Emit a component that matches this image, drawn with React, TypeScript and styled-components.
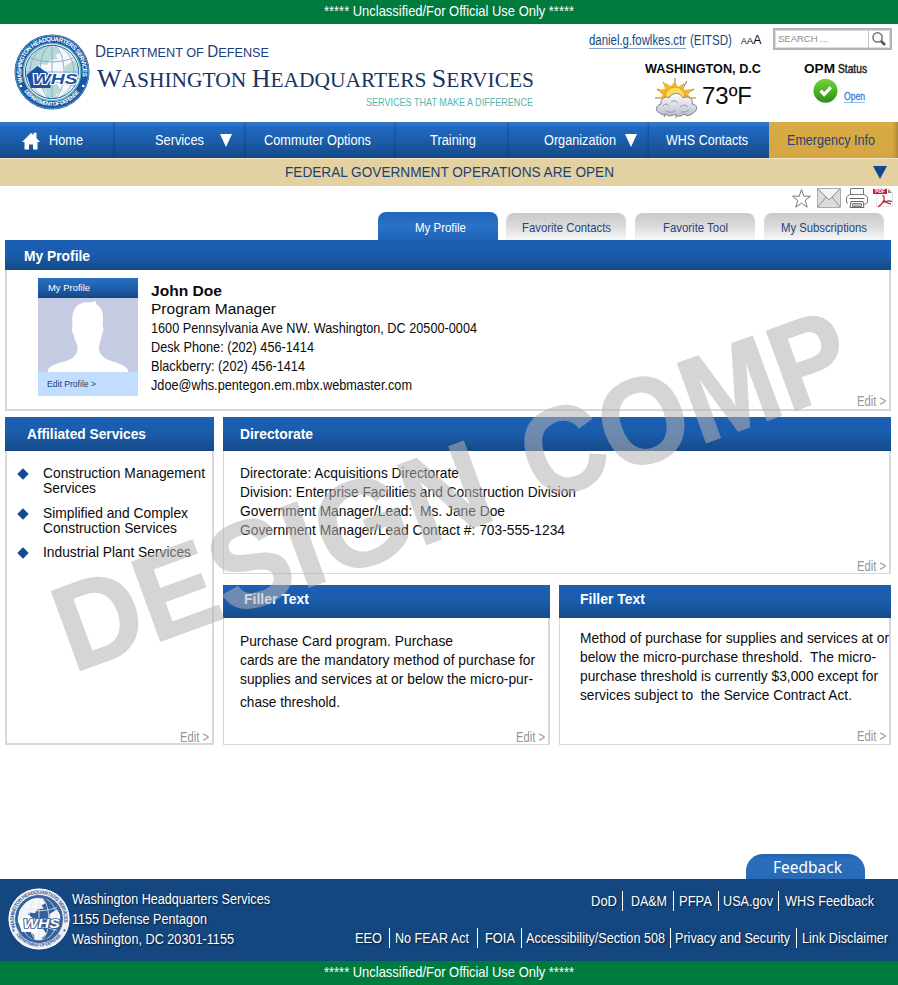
import React, { useId, useLayoutEffect, useRef, useState } from "react";
import styled, { createGlobalStyle, css } from "styled-components";

const GlobalStyle = createGlobalStyle`
  *, *::before, *::after { box-sizing: border-box; }
  body { margin: 0; background: #fff; }
  #root { width: 898px; }
  a { color: inherit; text-decoration: none; }
  svg { display: block; }
`;

const blue = "#154880";
const sans = `"Liberation Sans", Arial, sans-serif`;

/* ---------- text set to a fixed measure ---------- */

const Measure = styled.span<{ $width: number }>`
  display: block;
  flex: none;
  width: ${(p) => p.$width}px;
  white-space: pre;
`;

const Stretch = styled.span`
  display: inline-block;
  vertical-align: top;
  transform-origin: 0 0;
`;

function Fit({ width, children }: { width: number; children: React.ReactNode }) {
  const ref = useRef<HTMLSpanElement>(null);
  const [scale, setScale] = useState(1);
  useLayoutEffect(() => {
    const node = ref.current;
    if (node && node.offsetWidth) {
      const natural = parseFloat(getComputedStyle(node).width);
      setScale(width / natural);
    }
  }, [width]);
  return (
    <Measure $width={width}>
      <Stretch ref={ref} style={{ transform: `scaleX(${scale})` }}>
        {children}
      </Stretch>
    </Measure>
  );
}

/* ---------- page frame ---------- */

const Page = styled.div`
  position: relative;
  width: 898px;
  height: 985px;
  display: flex;
  flex-direction: column;
  overflow: hidden;
  background: #fff;
  color: #0b0b0b;
  font-family: ${sans};
`;

const Classification = styled.div`
  flex: none;
  height: 24px;
  display: flex;
  justify-content: center;
  background: #007b3e;
  color: #fff;
  font-size: 14.6px;
  line-height: 22px;
`;

/* ---------- header ---------- */

const Header = styled.header`
  flex: none;
  height: 98px;
  display: flex;
`;

const Brand = styled.div`
  width: 576px;
  display: flex;
  padding: 10px 0 0 14px;
`;

const BrandNames = styled.div`
  padding: 8px 0 0 5px;
`;

const Department = styled.div`
  height: 20px;
  color: #1c3f7c;
  font-size: 13.6px;
  line-height: 21px;
  big { font-size: 16.4px; line-height: 1; }
`;

const Agency = styled.h1`
  margin: 3px 0 0 2px;
  height: 30px;
  color: #17345f;
  font: 400 21.5px/30px "Liberation Serif", "Times New Roman", serif;
  big { font-size: 26px; line-height: 1; }
`;

const Motto = styled.div`
  margin: -1px 0 0 271px;
  color: #56b5ad;
  font-size: 11.4px;
  line-height: 16px;
`;

const Tools = styled.div`
  width: 322px;
  display: flex;
  flex-direction: column;
`;

const UserRow = styled.div`
  display: flex;
  height: 34px;
  padding: 4px 0 0 13px;
`;

const UserName = styled.a`
  height: 19px;
  margin-top: 2px;
  border-bottom: 1px solid #8fa3c8;
  color: ${blue};
  font-size: 14px;
  line-height: 21px;
`;

const UserUnit = styled.span`
  margin: 2px 0 0 4px;
  color: ${blue};
  font-size: 14px;
  line-height: 21px;
`;

const TextSize = styled.span`
  display: flex;
  align-items: baseline;
  margin: 3px 0 0 9px;
  width: 20px;
  height: 18px;
  font-size: 8.5px;
  line-height: 18px;
  span { font-size: 9.8px; }
  b { font-size: 12.2px; font-weight: 400; }
`;

const Search = styled.label`
  display: flex;
  width: 119px;
  height: 22px;
  margin-left: 12px;
  border: 2px solid #b3b3b3;
  box-shadow: inset 0 0 0 1px #dedede;
  color: #8b8b8b;
  font-size: 9.8px;
  line-height: 18px;
`;

const SearchHint = styled.span`
  width: 94px;
  padding: 0 0 0 3px;
  border-right: 1px solid #c2c2c2;
`;

const StatusRow = styled.div`
  display: flex;
  height: 64px;
`;

const Weather = styled.div`
  width: 150px;
  margin-left: 69px;
`;

const StatusTitle = styled.div`
  display: flex;
  height: 20px;
  font-size: 13.2px;
  font-weight: 700;
  line-height: 21px;
`;

const Reading = styled.div`
  display: flex;
  margin: -1px 0 0 9px;
  gap: 4px;
  font-size: 24px;
  line-height: 37px;
`;

const Opm = styled.div`
  margin-left: 9px;
`;

const OpmRow = styled.div`
  display: flex;
  margin: 0 0 0 9px;
  gap: 6px;
`;

const OpenLink = styled.a`
  height: 12px;
  margin-top: 13px;
  border-bottom: 1px solid #8fb9f3;
  color: #3781e2;
  -webkit-text-stroke: 0.3px #3781e2;
  font-size: 10px;
  line-height: 12px;
`;

const Squeezed = styled.span`
  margin-left: 3px;
  font-weight: 400;
  -webkit-text-stroke: 0.5px #333;
`;

/* ---------- navigation ---------- */

const Nav = styled.nav`
  flex: none;
  display: grid;
  grid-template-columns: 115px 131px 150px 113px 140px 120px 129px;
  height: 36px;
`;

const NavItem = styled.a<{ $left: number; $alert?: boolean; $edge?: boolean }>`
  display: flex;
  padding-left: ${(p) => p.$left}px;
  border-bottom: 1px solid #123f78;
  background: linear-gradient(#3377cb 0, #2f74c9 3px, #206ac0 5px, #1d61b2 40%, #164e8e 88%, #144782);
  box-shadow: inset -3px 0 3px -2px rgba(8, 45, 100, 0.4);
  color: #fff;
  font-size: 13.8px;
  line-height: 37px;
  ${(p) =>
    p.$edge &&
    css`
      box-shadow: none;
    `}
  ${(p) =>
    p.$alert &&
    css`
      border-bottom-color: #ba933a;
      background: linear-gradient(#dfb24d 0, #d8aa44 4px, #d5a641);
      box-shadow: inset -4px 0 4px -2px #a78132;
      color: #24447a;
    `}
`;

const HomeMark = styled.svg`
  margin: 10px 8px 0 0;
`;

const Arrow = styled.span<{ $gap?: number }>`
  width: 0;
  height: 0;
  margin: 12px 0 0 ${(p) => p.$gap ?? 16}px;
  border: solid transparent;
  border-width: 13px 6px 0;
  border-top-color: #fff;
`;

const NoticeArrow = styled.span`
  width: 0;
  height: 0;
  margin: 7px 11px 0 auto;
  border: solid transparent;
  border-width: 13px 7px 0;
  border-top-color: #0f4891;
`;

const Notice = styled.div`
  flex: none;
  display: flex;
  height: 28px;
  padding-left: 285px;
  border-top: 1px solid #f4e6c6;
  background: #e3d1a1;
  color: #1b4176;
  font-size: 14.5px;
  line-height: 26px;
`;

/* ---------- actions and tabs ---------- */

const Actions = styled.div`
  flex: none;
  display: flex;
  justify-content: flex-end;
  align-items: flex-start;
  gap: 5px;
  height: 26px;
  padding: 2px 5px 0 0;
`;

const Tabs = styled.div`
  flex: none;
  display: grid;
  grid-template-columns: 119px 120px 120px 120px;
  gap: 9px;
  height: 28px;
  padding-left: 378px;
  align-items: end;
`;

const Tab = styled.a<{ $active?: boolean }>`
  display: flex;
  justify-content: center;
  height: 27px;
  border-radius: 8px 8px 0 0;
  background: linear-gradient(#c9c9c9, #d9d9d9 45%, #f8f8f8);
  color: #24477c;
  font-size: 13.4px;
  line-height: 29px;
  ${(p) =>
    p.$active &&
    css`
      width: 120px;
      height: 28px;
      padding-left: 4px;
      background: linear-gradient(#1f65bb, #2a72c7 50%, #1f64b6);
      color: #fff;
      line-height: 31px;
    `}
`;

/* ---------- panels ---------- */

const Main = styled.main`
  flex: none;
  height: 639px;
  padding-left: 5px;
`;

const Panel = styled.section<{ $w: number; $h: number }>`
  display: flex;
  flex-direction: column;
  width: ${(p) => p.$w}px;
  height: ${(p) => p.$h}px;
`;

const PanelHead = styled.h2<{ $h: number; $left: number; $lh: number }>`
  flex: none;
  height: ${(p) => p.$h}px;
  margin: 0;
  padding-left: ${(p) => p.$left}px;
  background: linear-gradient(#1c60b4, #1a5bab 50%, #154c8a 96%, #164985);
  color: #fff;
  font-size: 14.2px;
  font-weight: 700;
  line-height: ${(p) => p.$lh}px;
`;

const PanelBody = styled.div<{ $thinLeft?: boolean }>`
  flex: 1;
  display: flex;
  flex-direction: column;
  border: solid #d8d8d8;
  border-width: 0 2px ${(p) => (p.$thinLeft ? 1 : 2)}px ${(p) => (p.$thinLeft ? 1 : 2)}px;
`;

const Edit = styled.a<{ $drop?: number }>`
  align-self: flex-end;
  margin: auto 3px ${(p) => -(p.$drop ?? 0)}px 0;
  color: #969696;
  font-size: 14px;
  line-height: 15px;
`;

const Lines = styled.div<{ $top: number; $left: number }>`
  padding: ${(p) => p.$top}px 0 0 ${(p) => p.$left}px;
  font-size: 14.4px;
  line-height: 19px;
`;

const LastLine = styled.div`
  margin-top: 4px;
`;

const Profile = styled.div`
  display: flex;
  height: 124px;
  padding: 8px 0 0 31px;
`;

const Card = styled.div`
  width: 100px;
  height: 118px;
  background: #c2deff;
`;

const CardHead = styled.div`
  height: 20px;
  padding-left: 10px;
  background: linear-gradient(#2d70c1, #1d5fae 50%, #154780);
  color: #fff;
  font-size: 9.8px;
  line-height: 19px;
`;

const CardLink = styled.a`
  display: block;
  padding: 2px 0 0 9px;
  color: #17417b;
  font-size: 8.8px;
  line-height: 20px;
`;

const Contact = styled.div`
  padding: 4px 0 0 13px;
  font-size: 14.4px;
  line-height: 19px;
`;

const Person = styled.div<{ $bold?: boolean }>`
  height: 18px;
  font-size: 15.4px;
  font-weight: ${(p) => (p.$bold ? 700 : 400)};
  line-height: 18px;
`;

const ContactLines = styled.div`
  padding-top: 1px;
`;

const Columns = styled.div`
  display: flex;
  gap: 9px;
  margin-top: 6px;
`;

const Stack = styled.div`
  display: flex;
  flex-direction: column;
  gap: 11px;
`;

const Pair = styled.div`
  display: flex;
  gap: 9px;
`;

const ServiceList = styled.ul`
  display: flex;
  flex-direction: column;
  gap: 9.5px;
  margin: 0;
  padding: 15px 0 0 10px;
  list-style: none;
  font-size: 14.3px;
  line-height: 15px;
`;

const Service = styled.li`
  display: flex;
  gap: 14px;
`;

const Diamond = styled.svg`
  margin-top: 2px;
`;

const Watermark = styled.div`
  position: absolute;
  left: 73px;
  top: 569.7px;
  display: flex;
  gap: 42px;
  transform: rotate(-20deg);
  transform-origin: 0 103.3px;
  color: #b5b2b4;
  font-size: 122px;
  font-weight: 700;
  line-height: 122px;
  -webkit-text-stroke: 1.6px #b5b2b4;
  opacity: 0.54;
  pointer-events: none;
`;

/* ---------- footer ---------- */

const FeedbackTab = styled.a`
  display: flex;
  align-self: flex-end;
  justify-content: center;
  flex: none;
  width: 119px;
  height: 25px;
  margin: -25px 33px 0 0;
  padding-left: 3px;
  border-radius: 17px 17px 0 0;
  background: linear-gradient(#2262ac, #2a6ebc 20%, #286ab6);
  color: #fff;
  font: 15.8px/26px "Noto Sans", "Open Sans", sans-serif;
`;

const Footer = styled.footer`
  flex: none;
  display: flex;
  height: 82px;
  padding-left: 8px;
  background: #14467f;
  color: #fff;
  font-size: 14px;
  text-shadow: 1px 1px 2px rgba(0, 0, 0, 0.65);
`;

const FooterSeal = styled.div`
  padding-top: 9px;
  text-shadow: none;
`;

const Address = styled.address`
  width: 210px;
  padding: 10px 0 0 2px;
  font-style: normal;
  line-height: 20px;
`;

const FooterLinks = styled.div`
  flex: 1;
  padding-top: 12px;
`;

const LinkRow = styled.div<{ $left: number }>`
  display: flex;
  height: 37px;
  padding-left: ${(p) => p.$left}px;
  line-height: 21px;
`;

const FootLink = styled.a<{ $before: number; $after: number }>`
  height: 20px;
  padding: 0 ${(p) => p.$after}px 0 ${(p) => p.$before}px;
  border-right: 1px solid #fff;
  &:last-child { border-right: 0; }
`;

/* ---------- drawings ---------- */

function Seal({ size, rim, ink, land, sky }: { size: number; rim: string; ink: string; land: string; sky: string }) {
  const id = useId();
  const light = rim !== "#1957a5";
  return (
    <svg width={size} height={size} viewBox="0 0 76 76">
      <defs>
        <path id={id + "t"} d="M9.1 48.5A30.8 30.8 0 1 1 66.9 48.5" />
        <path id={id + "b"} d="M9.600 56.500A34 34 0 0 0 66.400 56.500" />
        <clipPath id={id + "c"}><circle cx="38" cy="38" r="26.5" /></clipPath>
      </defs>
      <circle cx="38" cy="38" r="37.5" fill={rim} />
      <circle cx="38" cy="38" r="36.6" fill="none" stroke={light ? "#fff" : "#5ba8c4"} strokeWidth=".8" />
      <circle cx="38" cy="38" r="28.7" fill={sky} stroke={light ? ink : "#66b8b4"} strokeWidth="1.3" />
      <g clipPath={`url(#${id}c)`}>
        <path fill={land} d="M14 27l7-9 10-6 11 1 4 6-5 2 3 4-8 1-3 5-7-1-3 5 5 5-7 2-10 1zM51 32l9-6 5 8-2 9-8-4-5 1zM30 50l13 0 4 6-5 5-1 7-8-3-1-7-5-5z" />
        <g fill="none" stroke={light ? "#e4eaf4" : "#9aa8d6"} strokeWidth="1">
          <ellipse cx="38" cy="38" rx="12" ry="27" />
          <ellipse cx="38" cy="38" rx="22" ry="27" />
          <path d="M38 10v56M11 38h54M16 24q22 8 44 0M16 52q22-8 44 0" />
        </g>
      </g>
      <circle cx="38" cy="38" r="26.7" fill="none" stroke={light ? ink : "#2262a9"} strokeWidth="1" />
      <path d="M12.500 41L23.500 32l13 9v13H17z" fill={light ? "#fff" : "#1953a0"} />
      <text x="18.500" y="49.500" textLength="45" lengthAdjust="spacingAndGlyphs" fontFamily={sans} fontSize="15" fontWeight="700" fontStyle="italic" fill={light ? "#fff" : "#1953a0"} stroke={light ? ink : "#fff"} strokeWidth="2" paintOrder="stroke">WHS</text>
      <g fill={light ? ink : "#fff"} fontFamily={sans} fontWeight="700" fontSize="6.2">
        <text><textPath href={`#${id}t`} textLength="112">WASHINGTON HEADQUARTERS SERVICES</textPath></text>
        <text fontSize="5.6"><textPath href={`#${id}b`} textLength="64" startOffset="1">DEPARTMENT OF DEFENSE</textPath></text>
      </g>
      <circle cx="6.800" cy="52" r="1.3" fill={light ? ink : "#fff"} />
      <circle cx="69.200" cy="52" r="1.3" fill={light ? ink : "#fff"} />
    </svg>
  );
}

const SunCloud = () => (
  <svg width="44" height="43" viewBox="0 0 44 43">
    <defs>
      <linearGradient id="cloud" x2="0" y2="1"><stop stopColor="#fff" /><stop offset="1" stopColor="#b9bbcc" /></linearGradient>
    </defs>
    <path d="M21 1v7M9 5l4 6M33 4l-4 7M3 12l7 3M40 12l-7 4M1 21h6M37 21h5M3 31l5-2M12 36l-2 4M22 35v6M31 35l3 4" stroke="#8a825f" strokeWidth="1.100" />
    <path d="M21 4l3 6 6-4v7l8-1-4 6 5 4H5l4-4-6-5 8-1-2-7 8 4z" fill="#f4b52c" />
    <circle cx="21" cy="20" r="10" fill="#ffdc5a" stroke="#e49c25" />
    <path d="M6 36c-5-1-5-8 1-9-1-5 5-9 8-6 3-6 12-6 14 0 5-3 11 1 9 6 6 0 6 7 1 9-2 3-7 3-9 1-3 3-7 3-9 0-4 3-8 2-9 0-2 1-5 1-6-1z" fill="url(#cloud)" stroke="#74778e" strokeWidth=".9" />
    <path d="M9 29q3-4 6 0M17 25q4-3 7 1M26 30q5-4 8 0M12 34q6 3 10-1M27 35q5 1 8-2" fill="none" stroke="#9799ad" />
  </svg>
);

const Check = () => (
  <svg width="25" height="26" viewBox="0 0 25 26">
    <defs>
      <linearGradient id="go" x2="0" y2="1"><stop stopColor="#7ed044" /><stop offset=".5" stopColor="#4cb424" /><stop offset="1" stopColor="#2d8f18" /></linearGradient>
    </defs>
    <circle cx="12.5" cy="12.7" r="12" fill="url(#go)" />
    <path d="M7.6 12.6l3.6 3.8 6.6-7" fill="none" stroke="#fff" strokeWidth="3.2" />
  </svg>
);

const Magnifier = () => (
  <svg width="20" height="18" viewBox="0 0 20 18">
    <circle cx="8.6" cy="7.4" r="4.6" fill="#f7f7f7" stroke="#747474" strokeWidth="1.5" />
    <path d="M12 11l4 4" stroke="#555" strokeWidth="2.6" />
  </svg>
);

const ActionIcons = () => (
  <>
    <svg width="20" height="21" viewBox="0 0 20 21"><path d="M9.500 1.500l2.300 6.700h6.700l-5.300 4.200 2 6.800-5.700-4-5.700 4 2-6.800L.5 8.200h6.700z" fill="#fff" stroke="#777" /></svg>
    <svg width="24" height="21" viewBox="0 0 24 21">
      <path d="M.5.5h23v19H.5z" fill="#dcdcdc" stroke="#aaa" />
      <path d="M2 1h20L12 11z" fill="#f3f3f3" />
      <path d="M1 1l11 11L23 1M1 19l8-10M23 19L15 9" fill="none" stroke="#888" strokeWidth=".9" />
    </svg>
    <svg width="22" height="21" viewBox="0 0 22 21">
      <path d="M4.500 6V.5h13V6M2 15.500l-1.500-1V9l3-2.500h15l3 2.500v5.500l-2 1.500h-2" fill="none" stroke="#777" />
      <path d="M3.500 10.500h15M5 13.500h12l1 6H4z" fill="#fff" stroke="#666" />
      <path d="M6.500 15.500h9v3h-9z" fill="#bbb" stroke="#888" />
    </svg>
    <svg width="20" height="21" viewBox="0 0 20 21">
      <path d="M3.500.5h12l4 4v14h-16z" fill="#fff" stroke="#e4e4e4" />
      <path d="M15 1v4h4z" fill="#888" />
      <path d="M0 1h14v5H0z" fill="#c11f2d" />
      <text x="2" y="5.200" fontFamily={sans} fontSize="4.800" fontWeight="700" fill="#fff" textLength="10">PDF</text>
      <path d="M9.500 7.500c2 0 1.500 3 1.500 4.500 1 2 4 3.500 7 4M11 12c-1 3-3 5-6 7M10 14.500c3-1.500 6-2 9-1" fill="none" stroke="#b83640" strokeWidth="1.300" />
    </svg>
  </>
);

const Silhouette = () => (
  <svg width="100" height="74" viewBox="0 0 100 74">
    <path d="M0 0h100v74H0z" fill="#c5cbe2" />
    <path d="M9.500 74C10 70 13 68 17 66.500 23 64 30 63 34.500 60 38 57 39.500 54 39.500 50 39.500 45 36 42 35.500 36 33.500 34 33.500 30 34.500 28 34 23 34 19 34.800 16 37 7 43 4.500 49 4.300 53 4.200 56 4 58 2.800V6C62 8 65 13 65 19 65 23 64.500 26 64.800 28 66 31 65.500 34 64 36 63.500 42 61 45 61 50 61 54 63 57 66 59.500 71 63 78 64 83 66.500 87 68.500 90 70 90.500 74z" fill="#fff" />
  </svg>
);

/* ---------- page ---------- */

const services = [
  [["Construction Management", 162], ["Services", 53]],
  [["Simplified and Complex", 145], ["Construction Services", 134]],
  [["Industrial Plant Services", 148]],
] as [string, number][][];

type FooterItem = [label: string, width: number, before: number, after: number];

const topLinks: FooterItem[] = [
  ["DoD", 26, 0, 5],
  ["DA&M", 36, 8, 6],
  ["PFPA", 33, 5, 6],
  ["USA.gov", 50, 4, 5],
  ["WHS Feedback", 89, 6, 0],
];

const bottomLinks: FooterItem[] = [
  ["EEO", 27, 0, 7],
  ["No FEAR Act", 74, 5, 8],
  ["FOIA", 30, 7, 6],
  ["Accessibility/Section 508", 139, 4, 5],
  ["Privacy and Security", 115, 4, 6],
  ["Link Disclaimer", 86, 5, 0],
];

function FooterRow({ items, left }: { items: FooterItem[]; left: number }) {
  return (
    <LinkRow $left={left}>
      {items.map(([label, width, before, after]) => (
        <FootLink key={label} href="#" $before={before} $after={after}>
          <Fit width={width}>{label}</Fit>
        </FootLink>
      ))}
    </LinkRow>
  );
}

const Banner = () => (
  <Classification>
    <Fit width={250}>***** Unclassified/For Official Use Only *****</Fit>
  </Classification>
);

export default function App() {
  return (
    <Page>
      <GlobalStyle />
      <Banner />
      <Header>
        <Brand>
          <Seal size={76} rim="#1957a5" ink="#fff" land="#b4dcd6" sky="#f4f8fb" />
          <BrandNames>
            <Department><Fit width={174}><big>D</big>EPARTMENT OF <big>D</big>EFENSE</Fit></Department>
            <Agency><Fit width={437}><big>W</big>ASHINGTON <big>H</big>EADQUARTERS <big>S</big>ERVICES</Fit></Agency>
            <Motto><Fit width={167}>SERVICES THAT MAKE A DIFFERENCE</Fit></Motto>
          </BrandNames>
        </Brand>
        <Tools>
          <UserRow>
            <UserName href="#"><Fit width={97}>daniel.g.fowlkes.ctr</Fit></UserName>
            <UserUnit><Fit width={42}>(EITSD)</Fit></UserUnit>
            <TextSize>A<span>A</span><b>A</b></TextSize>
            <Search>
              <SearchHint><Fit width={50}>SEARCH ...</Fit></SearchHint>
              <Magnifier />
            </Search>
          </UserRow>
          <StatusRow>
            <Weather>
              <StatusTitle><Fit width={116}>WASHINGTON, D.C</Fit></StatusTitle>
              <Reading><SunCloud /><Fit width={50}>73ºF</Fit></Reading>
            </Weather>
            <Opm>
              <StatusTitle>
                <Fit width={31}>OPM</Fit>
                <Squeezed><Fit width={29}>Status</Fit></Squeezed>
              </StatusTitle>
              <OpmRow><Check /><OpenLink href="#"><Fit width={21}>Open</Fit></OpenLink></OpmRow>
            </Opm>
          </StatusRow>
        </Tools>
      </Header>
      <Nav>
        <NavItem href="#" $left={21}>
          <HomeMark width="20" height="18" viewBox="0 0 20 18">
            <path d="M1 10L10 1l2.500 2V.8h3V6L19 10h-2.500v7.500H12v-5H8v5H3.500V10z" fill="#fff" />
          </HomeMark>
          <Fit width={34}>Home</Fit>
        </NavItem>
        <NavItem href="#" $left={40}><Fit width={49}>Services</Fit><Arrow /></NavItem>
        <NavItem href="#" $left={18}><Fit width={107}>Commuter Options</Fit></NavItem>
        <NavItem href="#" $left={34}><Fit width={46}>Training</Fit></NavItem>
        <NavItem href="#" $left={35}><Fit width={72}>Organization</Fit><Arrow $gap={9} /></NavItem>
        <NavItem href="#" $left={17} $edge><Fit width={82}>WHS Contacts</Fit></NavItem>
        <NavItem href="#" $left={18} $alert><Fit width={88}>Emergency Info</Fit></NavItem>
      </Nav>
      <Notice>
        <Fit width={329}>FEDERAL GOVERNMENT OPERATIONS ARE OPEN</Fit>
        <NoticeArrow />
      </Notice>
      <Actions><ActionIcons /></Actions>
      <Tabs>
        <Tab href="#" $active><Fit width={51}>My Profile</Fit></Tab>
        <Tab href="#"><Fit width={89}>Favorite Contacts</Fit></Tab>
        <Tab href="#"><Fit width={65}>Favorite Tool</Fit></Tab>
        <Tab href="#"><Fit width={86}>My Subscriptions</Fit></Tab>
      </Tabs>
      <Main>
        <Panel $w={886} $h={171}>
          <PanelHead $h={30} $left={19} $lh={32}><Fit width={66}>My Profile</Fit></PanelHead>
          <PanelBody>
            <Profile>
              <Card>
                <CardHead><Fit width={42}>My Profile</Fit></CardHead>
                <Silhouette />
                <CardLink href="#"><Fit width={49}>Edit Profile &gt;</Fit></CardLink>
              </Card>
              <Contact>
                <Person $bold><Fit width={71}>John Doe</Fit></Person>
                <Person><Fit width={125}>Program Manager</Fit></Person>
                <ContactLines>
                  <Fit width={326}>1600 Pennsylvania Ave NW. Washington, DC 20500-0004</Fit>
                  <Fit width={163}>Desk Phone: (202) 456-1414</Fit>
                  <Fit width={154}>Blackberry: (202) 456-1414</Fit>
                  <Fit width={261}>Jdoe@whs.pentegon.em.mbx.webmaster.com</Fit>
                </ContactLines>
              </Contact>
            </Profile>
            <Edit href="#"><Fit width={29}>Edit &gt;</Fit></Edit>
          </PanelBody>
        </Panel>
        <Columns>
          <Panel $w={209} $h={328}>
            <PanelHead $h={34} $left={22} $lh={34}><Fit width={119}>Affiliated Services</Fit></PanelHead>
            <PanelBody>
              <ServiceList>
                {services.map((lines) => (
                  <Service key={lines[0][0]}>
                    <Diamond width="12" height="12" viewBox="0 0 12 12"><path d="M6 .3L11.700 6 6 11.700.3 6z" fill="#154c8e" /></Diamond>
                    <div>{lines.map(([label, width]) => <Fit key={label} width={width}>{label}</Fit>)}</div>
                  </Service>
                ))}
              </ServiceList>
              <Edit href="#" $drop={2}><Fit width={29}>Edit &gt;</Fit></Edit>
            </PanelBody>
          </Panel>
          <Stack>
            <Panel $w={668} $h={157}>
              <PanelHead $h={34} $left={17} $lh={34}><Fit width={73}>Directorate</Fit></PanelHead>
              <PanelBody $thinLeft>
                <Lines $top={13} $left={16}>
                  <Fit width={219}>Directorate: Acquisitions Directorate</Fit>
                  <Fit width={336}>Division: Enterprise Facilities and Construction Division</Fit>
                  <Fit width={265}>Government Manager/Lead:  Ms. Jane Doe</Fit>
                  <Fit width={325}>Government Manager/Lead Contact #: 703-555-1234</Fit>
                </Lines>
                <Edit href="#" $drop={1}><Fit width={29}>Edit &gt;</Fit></Edit>
              </PanelBody>
            </Panel>
            <Pair>
              <Panel $w={327} $h={160}>
                <PanelHead $h={33} $left={21} $lh={29}><Fit width={65}>Filler Text</Fit></PanelHead>
                <PanelBody $thinLeft>
                  <Lines $top={14} $left={16}>
                    <Fit width={213}>Purchase Card program. Purchase</Fit>
                    <Fit width={295}>cards are the mandatory method of purchase for</Fit>
                    <Fit width={293}>supplies and services at or below the micro-pur-</Fit>
                    <LastLine><Fit width={100}>chase threshold.</Fit></LastLine>
                  </Lines>
                  <Edit href="#" $drop={1}><Fit width={29}>Edit &gt;</Fit></Edit>
                </PanelBody>
              </Panel>
              <Panel $w={332} $h={160}>
                <PanelHead $h={33} $left={21} $lh={29}><Fit width={65}>Filler Text</Fit></PanelHead>
                <PanelBody $thinLeft>
                  <Lines $top={11} $left={20}>
                    <Fit width={309}>Method of purchase for supplies and services at or</Fit>
                    <Fit width={296}>below the micro-purchase threshold.  The micro-</Fit>
                    <Fit width={298}>purchase threshold is currently $3,000 except for</Fit>
                    <Fit width={272}>services subject to  the Service Contract Act.</Fit>
                  </Lines>
                  <Edit href="#"><Fit width={29}>Edit &gt;</Fit></Edit>
                </PanelBody>
              </Panel>
            </Pair>
          </Stack>
        </Columns>
      </Main>
      <FeedbackTab href="#"><Fit width={69}>Feedback</Fit></FeedbackTab>
      <Footer>
        <FooterSeal><Seal size={62} rim="#e9edf5" ink="#3c6298" land="#f4f6fa" sky="#32609b" /></FooterSeal>
        <Address>
          <Fit width={198}>Washington Headquarters Services</Fit>
          <Fit width={135}>1155 Defense Pentagon</Fit>
          <Fit width={162}>Washington, DC 20301-1155</Fit>
        </Address>
        <FooterLinks>
          <FooterRow items={topLinks} left={311} />
          <FooterRow items={bottomLinks} left={75} />
        </FooterLinks>
      </Footer>
      <Banner />
      <Watermark>
        <Fit width={454}>DESIGN</Fit>
        <Fit width={341}>COMP</Fit>
      </Watermark>
    </Page>
  );
}
